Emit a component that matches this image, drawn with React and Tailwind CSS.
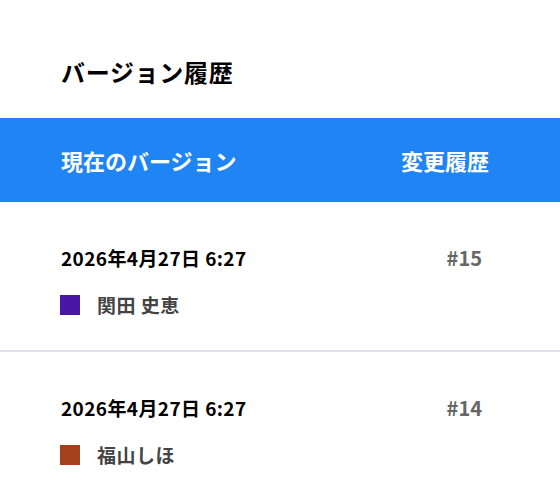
import React from 'react';

const versions = [
  { date: '2026年4月27日 6:27', num: '#15', user: '関田 史恵', color: 'bg-[#4a16a6]' },
  { date: '2026年4月27日 6:27', num: '#14', user: '福山しほ', color: 'bg-[#a5401c]' },
];

const font = { fontFamily: '"Noto Sans CJK JP", "Noto Sans", sans-serif' };

export default function App() {
  return (
    <div className="w-[560px] h-[500px] overflow-hidden bg-white" style={font}>
      {/* Title */}
      <div className="h-[118px] flex items-center px-[61px] pt-[26px]">
        <h1 className="text-[24px] font-bold text-black tracking-[0.7px]">バージョン履歴</h1>
      </div>

      {/* Header bar */}
      <div className="h-[84px] bg-[#1f84f4] flex items-center justify-between pl-[61px] pr-[71px] text-white text-[22px] font-bold">
        <span>現在のバージョン</span>
        <span>変更履歴</span>
      </div>

      {/* Version rows */}
      {versions.map((v, i) => (
        <div key={i} className={i > 0 ? 'border-t-2 border-[#e0e0ee]' : ''}>
          <div className="h-[148px] flex flex-col gap-[19px] pt-[42px] pl-[60px] pr-[78px]">
            <div className="h-[28px] flex items-center justify-between">
              <span className="text-[19px] font-bold text-black pl-[1px] tracking-[0.4px]">{v.date}</span>
              <span className="text-[20px] font-bold text-[#666]">{v.num}</span>
            </div>
            <div className="h-[28px] flex items-center gap-[17px]">
              <span className={`w-[20px] h-[20px] ${v.color}`}></span>
              <span className="text-[19px] font-bold text-[#444] tracking-[0.5px]">{v.user}</span>
            </div>
          </div>
        </div>
      ))}
    </div>
  );
}
